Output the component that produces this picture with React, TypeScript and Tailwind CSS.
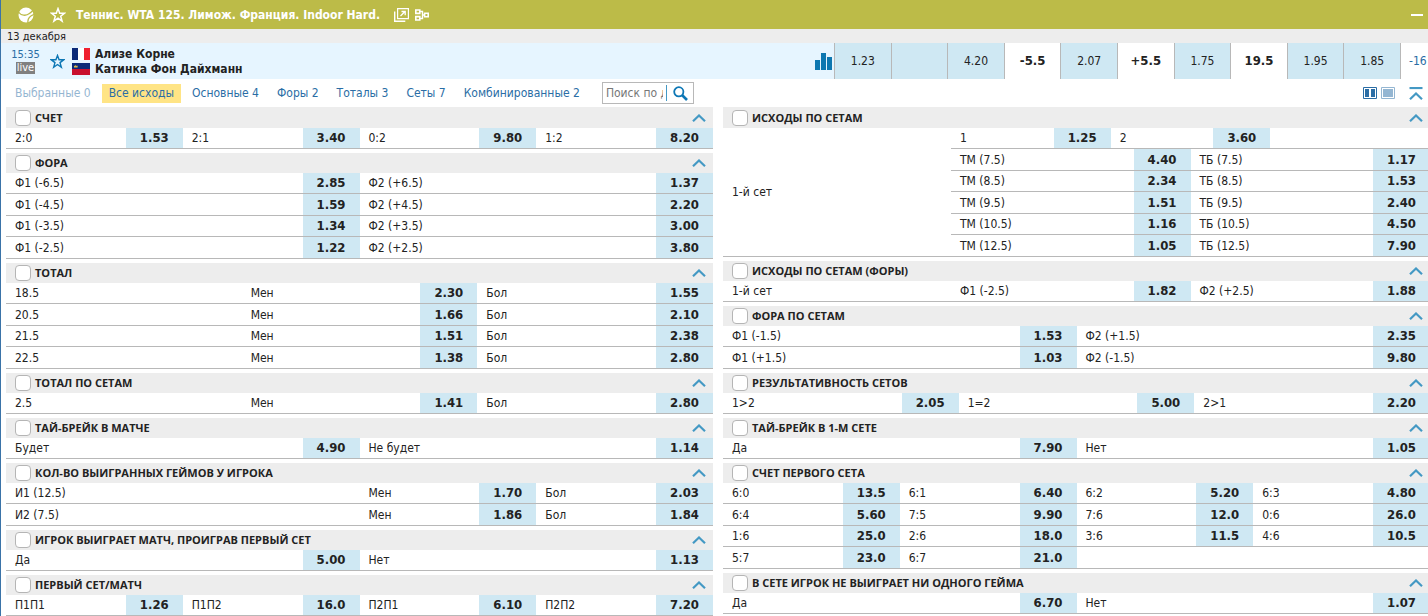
import { useState } from 'react';
import type { ReactNode } from 'react';

type Pick = [label: string, odd: string] | null;

interface Row {
  lead?: string;
  picks: Pick[];
}

interface Market {
  title: string;
  leadWidth?: string;
  rows: Row[];
}

const leftMarkets: Market[] = [
  { title: 'СЧЕТ', rows: [{ picks: [['2:0', '1.53'], ['2:1', '3.40'], ['0:2', '9.80'], ['1:2', '8.20']] }] },
  {
    title: 'ФОРА',
    rows: [
      { picks: [['Ф1 (-6.5)', '2.85'], ['Ф2 (+6.5)', '1.37']] },
      { picks: [['Ф1 (-4.5)', '1.59'], ['Ф2 (+4.5)', '2.20']] },
      { picks: [['Ф1 (-3.5)', '1.34'], ['Ф2 (+3.5)', '3.00']] },
      { picks: [['Ф1 (-2.5)', '1.22'], ['Ф2 (+2.5)', '3.80']] },
    ],
  },
  {
    title: 'ТОТАЛ',
    leadWidth: 'w-1/3',
    rows: [
      { lead: '18.5', picks: [['Мен', '2.30'], ['Бол', '1.55']] },
      { lead: '20.5', picks: [['Мен', '1.66'], ['Бол', '2.10']] },
      { lead: '21.5', picks: [['Мен', '1.51'], ['Бол', '2.38']] },
      { lead: '22.5', picks: [['Мен', '1.38'], ['Бол', '2.80']] },
    ],
  },
  { title: 'ТОТАЛ ПО СЕТАМ', leadWidth: 'w-1/3', rows: [{ lead: '2.5', picks: [['Мен', '1.41'], ['Бол', '2.80']] }] },
  { title: 'ТАЙ-БРЕЙК В МАТЧЕ', rows: [{ picks: [['Будет', '4.90'], ['Не будет', '1.14']] }] },
  {
    title: 'КОЛ-ВО ВЫИГРАННЫХ ГЕЙМОВ У ИГРОКА',
    leadWidth: 'w-1/2',
    rows: [
      { lead: 'И1 (12.5)', picks: [['Мен', '1.70'], ['Бол', '2.03']] },
      { lead: 'И2 (7.5)', picks: [['Мен', '1.86'], ['Бол', '1.84']] },
    ],
  },
  { title: 'ИГРОК ВЫИГРАЕТ МАТЧ, ПРОИГРАВ ПЕРВЫЙ СЕТ', rows: [{ picks: [['Да', '5.00'], ['Нет', '1.13']] }] },
  { title: 'ПЕРВЫЙ СЕТ/МАТЧ', rows: [{ picks: [['П1П1', '1.26'], ['П1П2', '16.0'], ['П2П1', '6.10'], ['П2П2', '7.20']] }] },
];

const setTotals: Row[] = [
  { picks: [['ТМ (7.5)', '4.40'], ['ТБ (7.5)', '1.17']] },
  { picks: [['ТМ (8.5)', '2.34'], ['ТБ (8.5)', '1.53']] },
  { picks: [['ТМ (9.5)', '1.51'], ['ТБ (9.5)', '2.40']] },
  { picks: [['ТМ (10.5)', '1.16'], ['ТБ (10.5)', '4.50']] },
  { picks: [['ТМ (12.5)', '1.05'], ['ТБ (12.5)', '7.90']] },
];

const rightMarkets: Market[] = [
  {
    title: 'ИСХОДЫ ПО СЕТАМ (ФОРЫ)',
    leadWidth: 'w-[228px]',
    rows: [{ lead: '1-й сет', picks: [['Ф1 (-2.5)', '1.82'], ['Ф2 (+2.5)', '1.88']] }],
  },
  {
    title: 'ФОРА ПО СЕТАМ',
    rows: [
      { picks: [['Ф1 (-1.5)', '1.53'], ['Ф2 (+1.5)', '2.35']] },
      { picks: [['Ф1 (+1.5)', '1.03'], ['Ф2 (-1.5)', '9.80']] },
    ],
  },
  { title: 'РЕЗУЛЬТАТИВНОСТЬ СЕТОВ', rows: [{ picks: [['1>2', '2.05'], ['1=2', '5.00'], ['2>1', '2.20']] }] },
  { title: 'ТАЙ-БРЕЙК В 1-М СЕТЕ', rows: [{ picks: [['Да', '7.90'], ['Нет', '1.05']] }] },
  {
    title: 'СЧЕТ ПЕРВОГО СЕТА',
    rows: [
      { picks: [['6:0', '13.5'], ['6:1', '6.40'], ['6:2', '5.20'], ['6:3', '4.80']] },
      { picks: [['6:4', '5.60'], ['7:5', '9.90'], ['7:6', '12.0'], ['0:6', '26.0']] },
      { picks: [['1:6', '25.0'], ['2:6', '18.0'], ['3:6', '11.5'], ['4:6', '10.5']] },
      { picks: [['5:7', '23.0'], ['6:7', '21.0'], null, null] },
    ],
  },
  { title: 'В СЕТЕ ИГРОК НЕ ВЫИГРАЕТ НИ ОДНОГО ГЕЙМА', rows: [{ picks: [['Да', '6.70'], ['Нет', '1.07']] }] },
];

const mainOdds = [
  { value: '1.23' },
  { value: '' },
  { value: '4.20' },
  { value: '-5.5', param: true },
  { value: '2.07' },
  { value: '+5.5', param: true },
  { value: '1.75' },
  { value: '19.5', param: true },
  { value: '1.95' },
  { value: '1.85' },
];

const tabs = ['Выбранные 0', 'Все исходы', 'Основные 4', 'Форы 2', 'Тоталы 3', 'Сеты 7', 'Комбинированные 2'];

const StarIcon = ({ className }: { className: string }) => (
  <svg className={className} viewBox="0 0 16 16" fill="none" stroke="currentColor" strokeWidth="1.5" aria-hidden="true">
    <path d="M8 1.6l1.7 4.6h4.9l-3.9 3 1.4 4.9L8 11.2l-4.1 2.9 1.4-4.9-3.9-3h4.9z" />
  </svg>
);

const BallIcon = () => (
  <svg className="size-4" viewBox="0 0 16 16" aria-hidden="true">
    <circle cx="8" cy="8" r="7.5" fill="#fff" />
    <path d="M.2 4.8C3 8.8 8 9.2 11.4 6.6c1.6-1.2 2.8-2.4 4-3.6" fill="none" stroke="#bcbb48" strokeWidth="1.3" />
    <path d="M10 16c-.6-3.8 1.6-7 6-8.6" fill="none" stroke="#bcbb48" strokeWidth="1.3" />
  </svg>
);

const OpenWindowIcon = () => (
  <svg className="h-[14px] w-[15px]" viewBox="0 0 15 14" fill="none" stroke="#fff" aria-hidden="true">
    <path d="M3.6.6h10.8v10H3.6z" strokeWidth="1.2" />
    <path d="M.7 3.5v9.8h10.6" strokeWidth="1.4" />
    <path d="M6.5 8L11 3.5M7.5 3.5h3.7v3.7" strokeWidth="1.3" />
  </svg>
);

const BracketIcon = () => (
  <svg className="h-3 w-[14px]" viewBox="0 0 14 12" fill="none" stroke="#fff" aria-hidden="true">
    <path d="M.8 1h4v3.4h-4zM.8 7.6h4V11h-4zM9.6 4.2h3.6v3.6H9.6z" strokeWidth="1.6" />
    <path d="M5 2.5h2.5v7H5M7.5 6h2" strokeWidth="1.4" />
  </svg>
);

const ChevronIcon = ({ bar = false }: { bar?: boolean }) => (
  <svg
    className={bar ? 'h-[13px] w-[14px]' : 'h-2 w-[14px]'}
    viewBox={bar ? '0 -5 14 13' : '0 0 14 8'}
    fill="none"
    stroke="#4499c4"
    strokeWidth="2.2"
    aria-hidden="true"
  >
    {bar && <path d="M.5-4h13" />}
    <path d="M1 7.2l6-5.7 6 5.7" />
  </svg>
);

const FranceFlag = () => (
  <svg className="h-3 w-[18px]" viewBox="0 0 18 12" aria-hidden="true">
    <path fill="#fff" d="M0 0h18v12H0z" />
    <path fill="#0b2a78" d="M0 0h6v12H0z" />
    <path fill="#f0202f" d="M12 0h6v12h-6z" />
  </svg>
);

const LiechtensteinFlag = () => (
  <svg className="h-3 w-[18px]" viewBox="0 0 18 12" aria-hidden="true">
    <path fill="#0b2a78" d="M0 0h18v6H0z" />
    <path fill="#c8102e" d="M0 6h18v6H0z" />
    <path fill="#e6c24a" d="M2 4.6V2.6l1 .6.8-1.4.8 1.4 1-.6v2z" />
  </svg>
);

interface OddsTableProps {
  rows: Row[];
  leadWidth?: string;
  rowClass?: string;
}

const OddsTable = ({ rows, leadWidth, rowClass = 'h-[21px] even:h-[22px]' }: OddsTableProps) => (
  <table className="w-full table-fixed border-separate border-spacing-0 text-[12px] leading-5">
    <colgroup>
      {leadWidth && <col className={leadWidth} />}
      {rows[0].picks.map((_, i) => [<col key={`l${i}`} />, <col key={`o${i}`} className="w-[57px]" />])}
    </colgroup>
    <tbody>
      {rows.map((row, r) => (
        <tr key={r} className={rowClass}>
          {leadWidth && <td className="border-b border-[#b8b8b8] px-[9px] py-0">{row.lead}</td>}
          {row.picks.map((pick, i) => [
            <td key={`l${i}`} className="truncate border-b border-[#b8b8b8] py-0 pl-[9px]">
              {pick?.[0]}
            </td>,
            <td key={`o${i}`} className={`border-b border-[#b8b8b8] p-0 ${pick ? 'bg-[#cfe8f3]' : ''}`}>
              {pick && (
                <button type="button" className="block w-full cursor-pointer text-center text-[13px] font-bold leading-5">
                  {pick[1]}
                </button>
              )}
            </td>,
          ])}
        </tr>
      ))}
    </tbody>
  </table>
);

const MarketSection = ({ title, children }: { title: string; children: ReactNode }) => {
  const [open, setOpen] = useState(true);

  return (
    <section className="group">
      <header className="flex h-5 items-center justify-between bg-[#ededed] pl-[9px] pr-[7px] group-first:h-[21px]">
        <label className="flex items-center gap-1 font-['Open_Sans','Noto_Sans',sans-serif] text-[11px] font-bold leading-4">
          <input
            type="checkbox"
            className="size-4 appearance-none rounded-[4px] border border-[#b5b5b5] bg-white checked:bg-[#4499c4]"
          />
          {title}
        </label>
        <button type="button" aria-label="Свернуть" onClick={() => setOpen(!open)}>
          <ChevronIcon />
        </button>
      </header>
      {open && children}
    </section>
  );
};

const App = () => {
  const [activeTab, setActiveTab] = useState('Все исходы');

  return (
    <div className="min-h-screen overflow-hidden border-l border-[#3a73a8] bg-white font-['DejaVu_Sans_Condensed','Noto_Sans',sans-serif] text-[#222]">
      {/* Tournament header */}
      <header className="flex h-[29px] items-center bg-[#bcbb48] pl-[17px] pr-[5px] text-white">
        <BallIcon />
        <button type="button" aria-label="В избранное" className="ml-4">
          <StarIcon className="size-4" />
        </button>
        <h1 className="ml-[10px] text-[12px] font-bold">Теннис. WTA 125. Лимож. Франция. Indoor Hard.</h1>
        <button type="button" aria-label="Открыть в новом окне" className="ml-[14px]">
          <OpenWindowIcon />
        </button>
        <button type="button" aria-label="Сетка турнира" className="ml-[6px]">
          <BracketIcon />
        </button>
        <button type="button" aria-label="Свернуть турнир" className="ml-auto flex h-4 w-3 items-center">
          <span className="h-[2px] w-full bg-white" />
        </button>
      </header>

      <p className="h-[14px] bg-[#ededed] pl-[6px] text-[11px] leading-4">13 декабря</p>

      {/* Match line */}
      <div className="flex h-9 bg-[#e6f5ff]">
        <div className="flex w-[49px] flex-col items-center text-[11px] text-[#2a6da5]">
          <time className="mt-1 leading-[15px]">15:35</time>
          <span className="bg-[#808080] px-px leading-[12px] text-white">live</span>
        </div>
        <button type="button" aria-label="В избранное" className="text-[#0d77b5]">
          <StarIcon className="size-[15px]" />
        </button>
        <div className="ml-[7px] flex flex-col justify-center gap-[3px]">
          <FranceFlag />
          <LiechtensteinFlag />
        </div>
        <a href="#match" className="ml-[5px] flex flex-col justify-center pt-[2px] text-[12px] font-bold leading-[15px]">
          <span>Ализе Корне</span>
          <span>Катинка Фон Дайхманн</span>
        </a>
        <button type="button" aria-label="Статистика" className="ml-auto mr-[2px]">
          <svg className="h-[17px] w-[17px]" viewBox="0 0 17 17" fill="#0d77b0" aria-hidden="true">
            <path d="M0 7h5v10H0zM6 0h5v17H6zM12 4h5v13h-5z" />
          </svg>
        </button>
        <div className="grid w-[566px] shrink-0 grid-cols-10">
          {mainOdds.map(({ value, param }, i) => (
            <button
              key={i}
              type="button"
              aria-label={value || 'Нет ставки'}
              className={`border-l border-[#b8b8b8] ${param ? 'bg-white text-[13px] font-bold' : 'bg-[#cfe8f3] text-[12px]'}`}
            >
              {value}
            </button>
          ))}
        </div>
        <button
          type="button"
          className="w-7 shrink-0 overflow-hidden whitespace-nowrap border-l border-[#b8b8b8] bg-white pl-2 text-left text-[12px] text-[#2a6da5]"
        >
          -16
        </button>
      </div>

      {/* Market filters */}
      <nav className="flex h-7 items-center pl-[7px] pr-[5px] text-[12px] text-[#2a6da5]">
        {tabs.map((tab) => (
          <button
            key={tab}
            type="button"
            onClick={() => setActiveTab(tab)}
            className={`mr-1 h-[19px] whitespace-nowrap px-[7px] first:opacity-50 ${tab === activeTab ? 'bg-[#ffe485]' : ''}`}
          >
            {tab}
          </button>
        ))}
        <div className="ml-[11px] flex h-[22px] w-[92px] items-center border border-[#b8b8b8]">
          <input
            type="text"
            aria-label="Поиск"
            placeholder="Поиск по дополнительным"
            className="h-4 w-[64px] border-r border-[#4499c4] px-[3px] outline-none placeholder:text-[#777]"
          />
          <button type="button" aria-label="Найти" className="ml-[6px]">
            <svg className="size-[15px]" viewBox="0 0 15 15" fill="none" stroke="#0d77b5" aria-hidden="true">
              <circle cx="5.8" cy="5.8" r="4.6" strokeWidth="1.8" />
              <path d="M9 9l5 5" strokeWidth="2.6" />
            </svg>
          </button>
        </div>
        <div className="ml-auto flex items-center">
          <button type="button" aria-label="Две колонки">
            <svg className="h-3 w-[14px]" viewBox="0 0 14 12" aria-hidden="true">
              <path fill="#fff" stroke="#2a6da5" d="M.5.5h13v11H.5z" />
              <path fill="#2a6da5" d="M2 2h4v8H2zM8 2h4v8H8z" />
            </svg>
          </button>
          <button type="button" aria-label="Одна колонка" className="ml-1">
            <svg className="h-3 w-[14px]" viewBox="0 0 14 12" aria-hidden="true">
              <path fill="#fff" stroke="#94b6d2" d="M.5.5h13v11H.5z" />
              <path fill="#94b6d2" d="M2 2h10v8H2z" />
            </svg>
          </button>
          <button type="button" aria-label="Свернуть все" className="ml-[14px]">
            <ChevronIcon bar />
          </button>
        </div>
      </nav>

      {/* Markets */}
      <main className="-mr-[2px] ml-[5px] grid grid-cols-2 gap-x-[10px]">
        <div className="flex flex-col gap-1">
          {leftMarkets.map((market) => (
            <MarketSection key={market.title} title={market.title}>
              <OddsTable rows={market.rows} leadWidth={market.leadWidth} />
            </MarketSection>
          ))}
        </div>
        <div className="flex flex-col gap-1">
          <MarketSection title="ИСХОДЫ ПО СЕТАМ">
            <div className="flex">
              <div className="flex w-[228px] shrink-0 items-center border-b border-[#b8b8b8] pl-[9px] text-[12px]">1-й сет</div>
              <div className="flex-1">
                <div className="border-b border-[#b8b8b8]">
                  <div className="-mb-px w-2/3">
                    <OddsTable rows={[{ picks: [['1', '1.25'], ['2', '3.60']] }]} />
                  </div>
                </div>
                <OddsTable rows={setTotals} rowClass="h-[22px] even:h-[21px]" />
              </div>
            </div>
          </MarketSection>
          {rightMarkets.map((market) => (
            <MarketSection key={market.title} title={market.title}>
              <OddsTable rows={market.rows} leadWidth={market.leadWidth} />
            </MarketSection>
          ))}
        </div>
      </main>
    </div>
  );
};

export default App;
